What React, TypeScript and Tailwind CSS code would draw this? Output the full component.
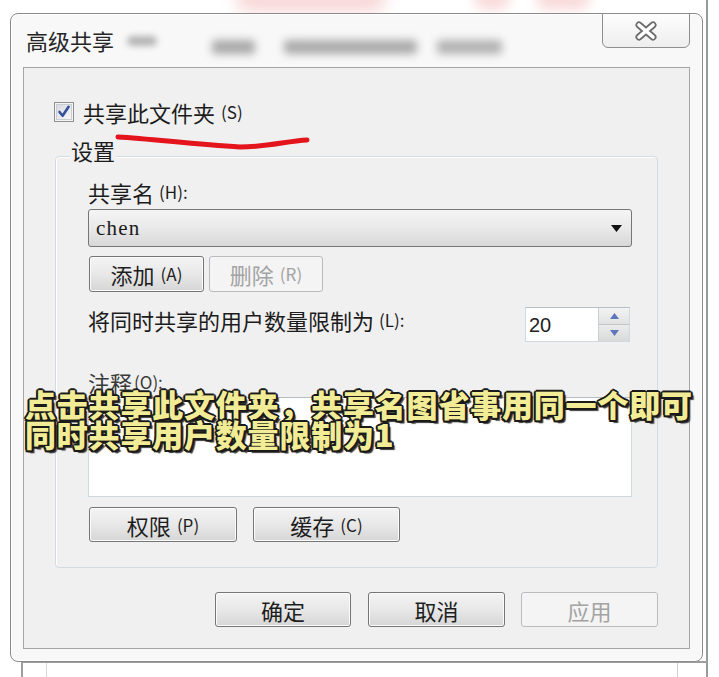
import React from "react";

const CJK = "font-['Noto_Sans_CJK_SC','Noto_Sans',sans-serif]";

function WinButton({
  className,
  disabled,
  label,
  hint,
}: {
  className: string;
  disabled?: boolean;
  label: string;
  hint?: string;
}) {
  return (
    <div
      className={
        "flex items-center justify-center rounded-[3px] border " +
        (disabled
          ? "border-[#b9bcbf] bg-[#f4f4f4] text-[#a3a3a3] "
          : "border-[#767676] bg-linear-to-b from-[#f4f4f4] via-[#e8e8e8] to-[#d6d6d6] text-[#1e1e1e] shadow-[inset_0_0_0_1px_#fbfbfb] ") +
        className
      }
    >
      <span className="text-[22px] leading-[24px]">{label}</span>
      {hint ? (
        <span className="ml-[6px] text-[17px] leading-[24px]">{hint}</span>
      ) : null}
    </div>
  );
}

export default function App() {
  return (
    <div
      className={
        "relative h-[677px] w-[719px] overflow-hidden bg-white pl-[10px] pt-[13px] text-[#1c1c1c] " +
        CJK
      }
    >
      {/* blurred background content peeking above the dialog */}
      <div className="absolute left-[236px] top-[-14px] h-[26px] w-[150px] rounded-full bg-[#f2b0b0] opacity-50 blur-[8px]" />
      <div className="absolute left-[474px] top-[-12px] h-[22px] w-[36px] rounded-full bg-[#f2b0b0] opacity-45 blur-[6px]" />
      <div className="absolute left-[536px] top-[-12px] h-[22px] w-[54px] rounded-full bg-[#f2b0b0] opacity-45 blur-[6px]" />
      <div className="absolute left-[706px] top-0 h-[677px] w-[2px] bg-[#9a9a9a]" />
      <div className="absolute left-[21px] top-[661px] h-[30px] w-[687px] border-l-2 border-t-2 border-[#9e9e9e]" />
      <div className="absolute left-[46px] top-[663px] h-[20px] w-[1px] bg-[#d8d8d8]" />
      <div className="absolute left-[677px] top-[663px] h-[20px] w-[1px] bg-[#d0d0d0]" />

      {/* dialog window */}
      <div className="relative flex h-[649px] w-[693px] flex-col rounded-[8px] border border-[#8a8a8a] bg-[#f8f8f8] shadow-[inset_0_0_0_1px_#ffffff]">
        {/* title bar */}
        <div className="flex h-[53px] items-start">
          <div className="flex items-start pl-[15px] pt-[14px]">
            <span className="text-[22px] leading-[24px] text-[#262626]">高级共享</span>
            <span className="ml-[13px] mt-[8px] h-[10px] w-[30px] rounded-full bg-[#b4b4b4] blur-[3px]" />
            <span className="ml-[55px] mt-[12px] h-[14px] w-[43px] rounded-[4px] bg-[#a9a9a9] blur-[4px]" />
            <span className="ml-[29px] mt-[12px] h-[14px] w-[133px] rounded-[4px] bg-[#aaaaaa] blur-[4px]" />
            <span className="ml-[20px] mt-[12px] h-[14px] w-[65px] rounded-[4px] bg-[#b2b2b2] blur-[4px]" />
          </div>
          <div className="-mt-[1px] ml-auto mr-[12px] flex h-[35px] w-[88px] items-center justify-center rounded-b-[6px] border border-[#8e8e8e] bg-linear-to-b from-[#fdfdfd] to-[#eeeeee]">
            <svg width="24" height="20" viewBox="0 0 24 20">
              <path d="M5 4 L19 16 M19 4 L5 16" stroke="#6b6b6b" strokeWidth="7" strokeLinecap="round" />
              <path d="M5 4 L19 16 M19 4 L5 16" stroke="#ffffff" strokeWidth="3.6" strokeLinecap="round" />
            </svg>
          </div>
        </div>

        {/* client panel */}
        <div className="mx-[12px] flex h-[582px] flex-col border border-[#a5a5a5] bg-[#f0f0f0]">
          {/* checkbox row */}
          <div className="ml-[30px] mt-[33px] flex h-[22px] items-center gap-[9px]">
            <svg width="20" height="20" viewBox="0 0 20 20">
              <defs>
                <linearGradient id="cbg" x1="0" y1="0" x2="1" y2="1">
                  <stop offset="0" stopColor="#d6d9de" />
                  <stop offset="1" stopColor="#f7f8f9" />
                </linearGradient>
              </defs>
              <rect x="0.5" y="0.5" width="19" height="19" fill="#f4f4f4" stroke="#8e8f90" />
              <rect x="2.5" y="2.5" width="15" height="15" fill="url(#cbg)" stroke="#c9ccd0" />
              <path d="M5.5 10 L8.6 13.8 L14.6 4.8" fill="none" stroke="#34529a" strokeWidth="2.6" strokeLinecap="round" strokeLinejoin="round" />
            </svg>
            <div className="flex items-center">
              <span className="text-[22px] leading-[24px]">共享此文件夹</span>
              <span className="ml-[6px] text-[17px] leading-[24px]">(S)</span>
            </div>
          </div>

          {/* group box */}
          <div className="relative ml-[31px] mt-[33px] h-[412px] w-[603px] rounded-[4px] border border-[#d3dbe2] shadow-[inset_1px_1px_0_#ffffff]">
            <span className="absolute left-[14px] top-[-19px] bg-[#f0f0f0] px-[1px] text-[22px] leading-[24px]">
              设置
            </span>
            <div className="flex flex-col pl-[32px] pt-[23px]">
              <div className="flex h-[24px] items-center">
                <span className="text-[22px] leading-[24px]">共享名</span>
                <span className="ml-[5px] text-[17px] leading-[24px]">(H):</span>
              </div>

              <div className="mt-[5px] flex h-[38px] w-[544px] items-center rounded-[3px] border border-[#767676] bg-linear-to-b from-[#f5f5f5] via-[#e9e9e9] to-[#d8d8d8] pl-[7px] pr-[9px]">
                <span className="font-['Liberation_Serif',serif] text-[21px] font-medium leading-[24px] tracking-[1.2px] text-[#1a1a1a]">
                  chen
                </span>
                <svg className="ml-auto" width="11" height="7" viewBox="0 0 11 7">
                  <path d="M0 0 H11 L5.5 7 Z" fill="#111111" />
                </svg>
              </div>

              <div className="mt-[9px] flex">
                <WinButton className="ml-[1px] h-[36px] w-[115px]" label="添加" hint="(A)" />
                <WinButton className="ml-[5px] h-[36px] w-[114px]" disabled label="删除" hint="(R)" />
              </div>

              <div className="mt-[15px] flex h-[35px] w-[544px] items-center justify-between">
                <div className="flex items-center pb-[9px]">
                  <span className="text-[22px] leading-[24px]">将同时共享的用户数量限制为</span>
                  <span className="ml-[5px] text-[17px] leading-[24px]">(L):</span>
                </div>
                <div className="mr-[2px] flex h-[35px] w-[105px] border border-[#d2d8de] border-t-[#b7bec6] bg-white">
                  <div className="flex flex-1 items-center pl-[3px] font-['Liberation_Sans',sans-serif] text-[20px] leading-[24px] text-[#222222]">
                    20
                  </div>
                  <div className="flex w-[31px] flex-col border-l border-[#c9ced4] bg-[#e8e8e8]">
                    <div className="flex flex-1 items-center justify-center border-b border-[#c4c4c4] bg-linear-to-b from-[#f3f3f3] to-[#e2e2e2]">
                      <svg width="9" height="6" viewBox="0 0 9 6">
                        <path d="M0 6 H9 L4.5 0 Z" fill="#5f76bd" />
                      </svg>
                    </div>
                    <div className="flex flex-1 items-center justify-center bg-linear-to-b from-[#ececec] to-[#d9d9d9]">
                      <svg width="9" height="6" viewBox="0 0 9 6">
                        <path d="M0 0 H9 L4.5 6 Z" fill="#5f76bd" />
                      </svg>
                    </div>
                  </div>
                </div>
              </div>

              <div className="mt-[28px] flex h-[24px] items-center text-[#3a3a3a]">
                <span className="text-[22px] leading-[24px]">注释</span>
                <span className="ml-[2px] text-[17px] leading-[24px]">(O):</span>
              </div>

              <div className="mt-[3px] h-[100px] w-[544px] border border-[#d0d8e0] border-t-[#b4bcc5] bg-white" />

              <div className="mt-[10px] flex">
                <WinButton className="ml-[1px] h-[35px] w-[148px]" label="权限" hint="(P)" />
                <WinButton className="ml-[16px] h-[35px] w-[147px]" label="缓存" hint="(C)" />
              </div>
            </div>
          </div>

          {/* dialog buttons */}
          <div className="ml-[31px] mt-[24px] flex w-[603px] justify-end">
            <WinButton className="h-[35px] w-[136px]" label="确定" />
            <WinButton className="ml-[17px] h-[35px] w-[137px]" label="取消" />
            <WinButton className="ml-[16px] h-[35px] w-[137px]" disabled label="应用" />
          </div>
        </div>
      </div>

      {/* red hand-drawn underline annotation */}
      <svg
        className="absolute left-[112px] top-[130px]"
        width="205"
        height="24"
        viewBox="0 0 205 24"
      >
        <path
          d="M6 7 C 40 9, 80 14, 128 17 C 155 17, 175 11, 195 10"
          fill="none"
          stroke="#e3141b"
          strokeWidth="5"
          strokeLinecap="round"
        />
      </svg>

      {/* video caption overlay */}
      <div className="absolute left-[25px] top-[389px] z-10 text-[31px] font-black leading-[30px] tracking-[0.8px] text-[#f3ec96] [text-shadow:2px_0_0_#1a1a1a,-2px_0_0_#1a1a1a,0_2px_0_#1a1a1a,0_-2px_0_#1a1a1a,1.5px_1.5px_0_#1a1a1a,-1.5px_-1.5px_0_#1a1a1a,1.5px_-1.5px_0_#1a1a1a,-1.5px_1.5px_0_#1a1a1a,3px_3px_1px_#3a3a3a]">
        <div>点击共享此文件夹，共享名图省事用同一个即可</div>
        <div>同时共享用户数量限制为1</div>
      </div>
    </div>
  );
}
